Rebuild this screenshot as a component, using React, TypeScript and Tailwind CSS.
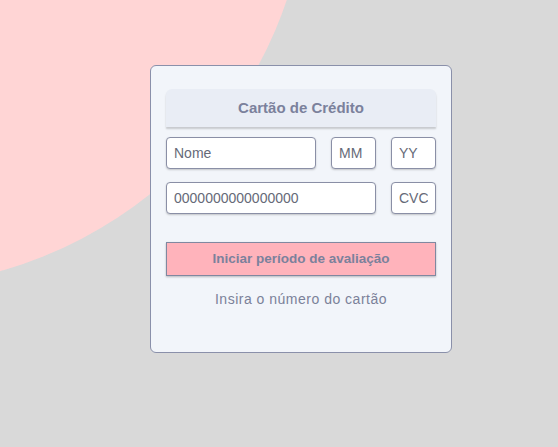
export default function App() {
  return (
    <main className="relative h-[447px] w-[558px] overflow-hidden bg-[#d9d9d9] font-['Liberation_Sans',Arial,sans-serif]">
      <div className="absolute left-[-548px] top-[-548px] h-[836px] w-[856px] rounded-[50%] bg-[#ffd5d5]" />

      <div className="relative pl-[150px] pt-[65px]">
        <div className="flex h-[288px] w-[302px] flex-col rounded-[6px] border border-[#8a90aa] bg-[#f2f5fa] px-[15px] pt-[23px]">
          <div className="flex h-[38px] items-center justify-center rounded-t-[6px] bg-[#e9edf5] shadow-[0_2px_2px_rgba(0,0,0,0.18)]">
            <h1 className="text-[15px] font-bold text-[#7b819c]">Cartão de Crédito</h1>
          </div>

          <div className="mt-[10px] flex gap-[15px]">
            <Field placeholder="Nome" width="w-[150px]" />
            <Field placeholder="MM" width="w-[45px]" />
            <Field placeholder="YY" width="w-[45px]" />
          </div>
          <div className="mt-[13px] flex gap-[15px]">
            <Field placeholder="0000000000000000" width="w-[210px]" />
            <Field placeholder="CVC" width="w-[45px]" />
          </div>

          <button
            type="button"
            className="mt-[28px] h-[34px] w-full border border-[#8088a0] bg-[#ffb3bb] text-[13.5px] font-bold text-[#7b819c] shadow-[0_1px_2px_rgba(0,0,0,0.25)]"
          >
            Iniciar período de avaliação
          </button>

          <p className="mt-[13px] text-center text-[14px] tracking-[0.5px] text-[#7b8199]">
            Insira o número do cartão
          </p>
        </div>
      </div>
    </main>
  );
}

function Field({ placeholder, width }: { placeholder: string; width: string }) {
  return (
    <input
      type="text"
      placeholder={placeholder}
      className={`${width} h-[32px] rounded-[4px] border border-[#8a8fa6] bg-white px-[7px] text-[14px] text-[#666a78] shadow-[0_1px_2px_rgba(0,0,0,0.2)] outline-none placeholder:text-[#666a78]`}
    />
  );
}
